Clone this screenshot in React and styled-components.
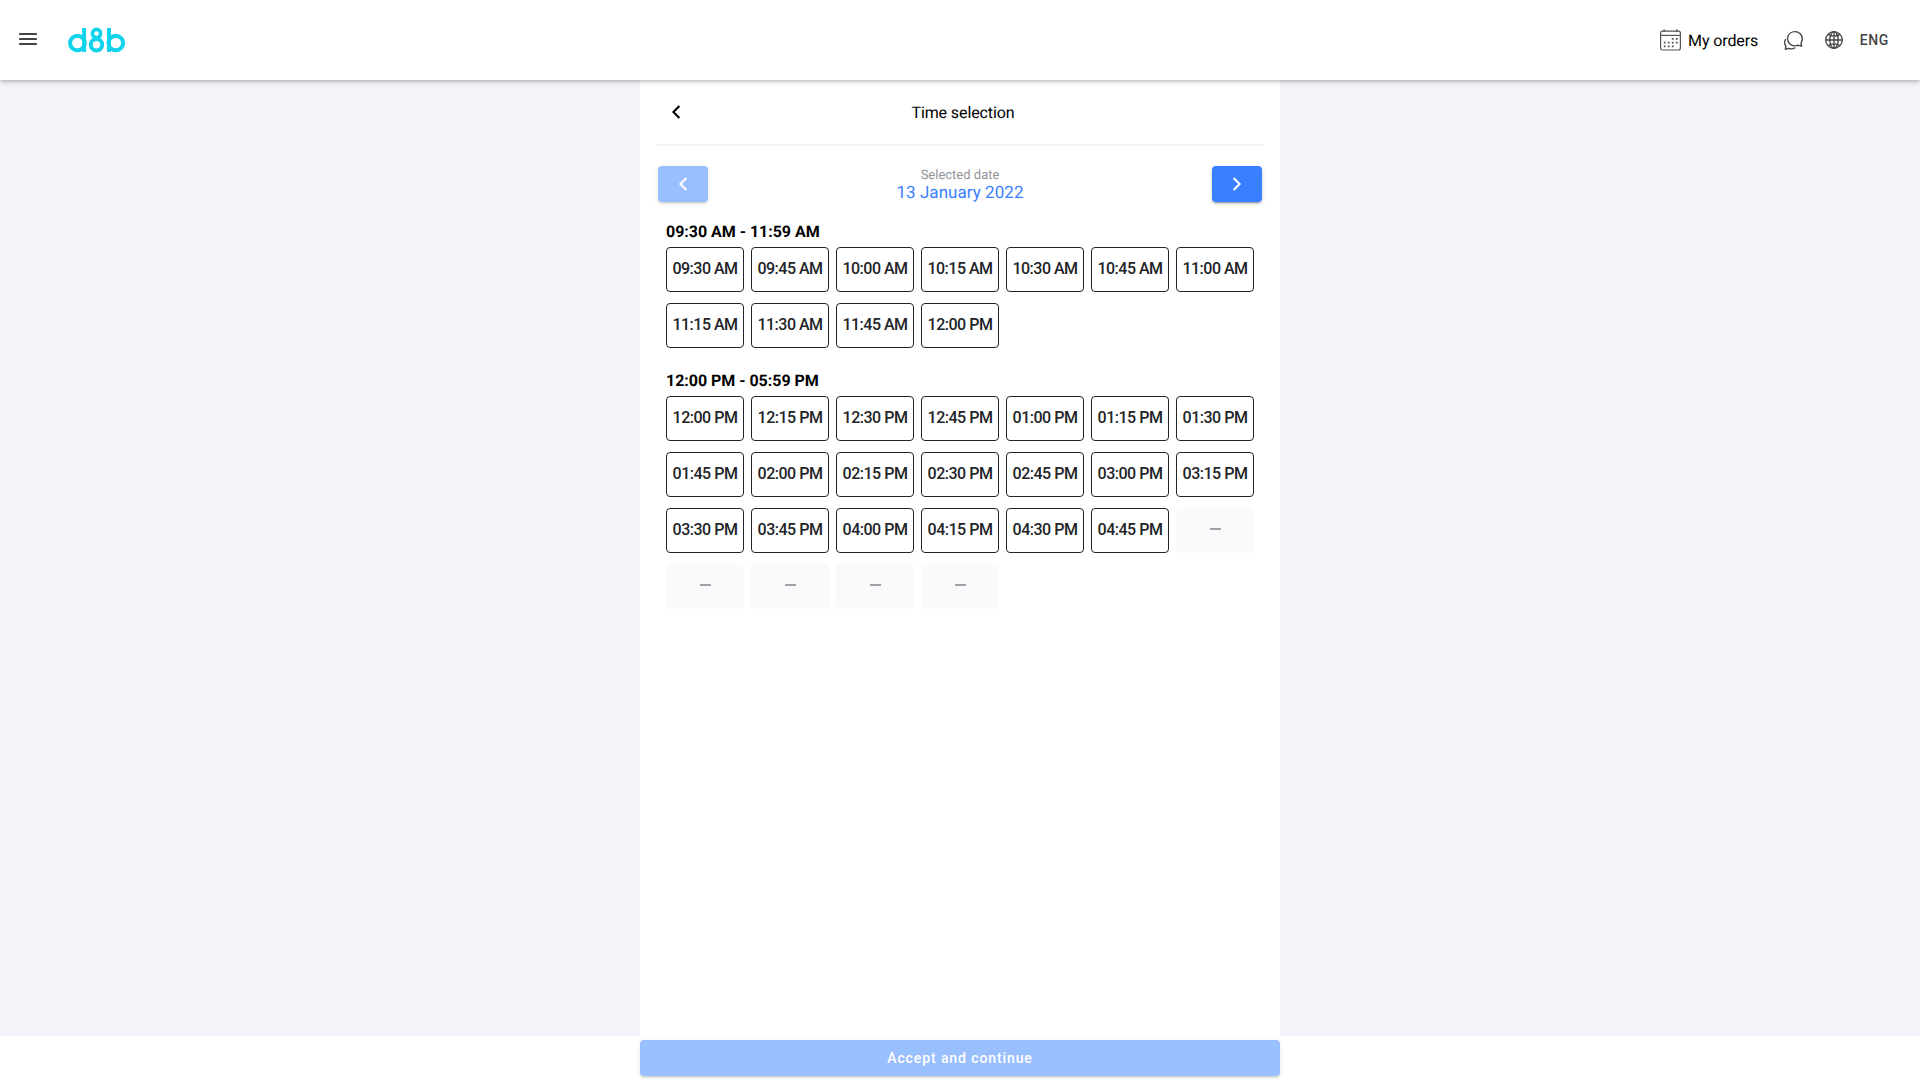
import React from "react";
import styled, { createGlobalStyle } from "styled-components";

const GlobalStyle = createGlobalStyle`
  *, *::before, *::after { box-sizing: border-box; }
  body {
    margin: 0;
    background: #fff;
    color: #000;
    font-family: Roboto, "Liberation Sans", sans-serif;
    font-size: 16px;
    -webkit-font-smoothing: antialiased;
    text-rendering: geometricPrecision;
  }
  button { font-family: inherit; border: 0; padding: 0; background: none; }
`;

const Page = styled.div`
  display: flex;
  flex-direction: column;
  height: 1080px;
  overflow: hidden;
`;

const TopBar = styled.header`
  position: relative;
  z-index: 1;
  display: flex;
  align-items: center;
  justify-content: space-between;
  flex: none;
  height: 80px;
  padding: 0 31px 0 19px;
  background: #fff;
  box-shadow: 0 2px 4px -1px rgba(0, 0, 0, 0.2), 0 1px 6px rgba(0, 0, 0, 0.16);
`;

const BarGroup = styled.div`
  display: flex;
  align-items: center;
`;

const IconButton = styled.button`
  display: flex;
  margin-left: ${(p) => p.$gap || 0}px;
  padding-bottom: ${(p) => p.$lift || 0}px;
  color: #444;
`;

const LogoLink = styled.a`
  display: flex;
  margin-left: 31px;
`;

const OrdersLink = styled.a`
  display: flex;
  align-items: center;
  gap: 7px;
  line-height: 19px;
`;

const Label = styled.span`
  padding: 2px 0 1px;
  letter-spacing: -0.1px;
`;

const Language = styled.button`
  margin-left: 17px;
  color: #444;
  font-size: 14px;
  font-weight: 500;
  line-height: 16px;
  letter-spacing: 0.6px;
`;

const Content = styled.main`
  display: flex;
  justify-content: center;
  flex: none;
  height: 956px;
  background: #f3f4f9;
`;

const Panel = styled.section`
  width: 640px;
  padding: 0 16px;
  background: #fff;
`;

const PanelHeader = styled.div`
  display: grid;
  grid-template-columns: 40px 1fr 34px;
  align-items: center;
  height: 66px;
  border-bottom: 2px solid #f3f4f9;
`;

const Back = styled.button`
  display: flex;
  justify-content: center;
`;

const Title = styled.h1`
  margin: 0;
  padding-top: 1px;
  font-size: 16px;
  font-weight: 400;
  line-height: 19px;
  letter-spacing: -0.1px;
  text-align: center;
`;

const DateRow = styled.div`
  display: flex;
  justify-content: space-between;
  align-items: center;
  height: 36px;
  margin: 20px 2px 0;
`;

const DateButton = styled.button`
  display: flex;
  align-items: center;
  justify-content: center;
  width: 50px;
  height: 36px;
  border-radius: 4px;
  background: #3880ff;
  color: #fff;
  opacity: ${(p) => (p.disabled ? 0.5 : 1)};
  box-shadow: 0 3px 1px -2px rgba(0, 0, 0, 0.2), 0 2px 2px 0 rgba(0, 0, 0, 0.14),
    0 1px 5px 0 rgba(0, 0, 0, 0.12);
`;

const DateLabel = styled.div`
  display: flex;
  flex-direction: column;
  align-items: center;
  padding-top: 1px;
`;

const Caption = styled.span`
  color: #92949c;
  font-size: 13px;
  line-height: 17px;
`;

const DateValue = styled.span`
  color: #3880ff;
  font-size: 17px;
  line-height: 18px;
  letter-spacing: 0.05px;
`;

const Range = styled.section`
  margin: ${(p) => (p.$first ? 20 : 23)}px 10px 0;
`;

const RangeTitle = styled.h2`
  margin: 0;
  padding-bottom: 6px;
  font-size: 16px;
  font-weight: 700;
  letter-spacing: -0.03px;
  line-height: 19px;
`;

const Slots = styled.div`
  display: grid;
  grid-template-columns: repeat(7, 78px);
  grid-auto-rows: 45px;
  gap: 11px 7px;
`;

const Slot = styled.button`
  display: flex;
  align-items: center;
  justify-content: center;
  padding-bottom: 2px;
  border: 1px solid ${(p) => (p.disabled ? "#f9fafc" : "#222428")};
  border-radius: 4px;
  background: ${(p) => (p.disabled ? "#f9fafc" : "#fff")};
  color: ${(p) => (p.disabled ? "#909194" : "#222428")};
  font-size: 16px;
  font-weight: 500;
  line-height: 19px;
  letter-spacing: -0.5px;
  white-space: nowrap;
`;

const Dash = styled.span`
  width: 11px;
  height: 2px;
  margin-bottom: 1px;
  background: #a0a1a4;
`;

const Footer = styled.footer`
  display: flex;
  justify-content: center;
  padding-top: 4px;
`;

const Accept = styled.button`
  width: 640px;
  height: 36px;
  border-radius: 4px;
  background: #3880ff;
  color: #fff;
  font-size: 14px;
  font-weight: 500;
  line-height: 16px;
  letter-spacing: 0.9px;
  opacity: 0.5;
  box-shadow: 0 3px 1px -2px rgba(0, 0, 0, 0.2), 0 2px 2px 0 rgba(0, 0, 0, 0.14),
    0 1px 5px 0 rgba(0, 0, 0, 0.12);
`;

const MenuIcon = () => (
  <svg width="18" height="14" viewBox="0 0 18 14" fill="none" stroke="currentColor" strokeWidth="2.2" strokeLinecap="round">
    <path d="M1 2H17M1 7H17M1 12H17" />
  </svg>
);

const Logo = () => (
  <svg width="57" height="26" viewBox="0 0 57 26" fill="none" stroke="#11d3ea" strokeWidth="4" role="img" aria-label="d8b">
    <circle cx="9.4" cy="16" r="7.3" />
    <line x1="16.1" y1="1" x2="16.1" y2="25" />
    <circle cx="28.5" cy="6.5" r="4.1" strokeWidth="3.6" />
    <circle cx="28.5" cy="17.7" r="5.7" />
    <line x1="41" y1="1" x2="41" y2="25" />
    <circle cx="47.8" cy="16" r="7.3" />
  </svg>
);

const CalendarIcon = () => (
  <svg width="21" height="22" viewBox="0.4 0 21 22" fill="none" stroke="#555" strokeWidth="1.2">
    <rect x="1" y="2.2" width="19.8" height="18.8" rx="2" />
    <path d="M1 6.4H20.8" />
    <path d="M4.5 0.6V3M17.3 0.6V3" strokeWidth="1.5" />
    <path d="M12.2 9.8h1.8M16.2 9.8h1.8M4.2 13.6h1.8M8.2 13.6h1.8M12.2 13.6h1.8M16.2 13.6h1.8M4.2 17.4h1.8M8.2 17.4h1.8M12.2 17.4h1.8" strokeWidth="1.8" />
  </svg>
);

const ChatIcon = () => (
  <svg width="19" height="19" viewBox="32 32 448 448" fill="none" stroke="currentColor" strokeWidth="32" strokeLinecap="round" strokeLinejoin="round">
    <path d="M431 320.6c-1-3.6 1.2-8.6 3.3-12.2a33.68 33.68 0 012.1-3.1A162 162 0 00464 215c.3-92.2-77.5-167-173.7-167-83.9 0-153.9 57.1-170.3 132.9a160.7 160.7 0 00-3.7 34.2c0 92.3 74.8 169.1 171 169.1 15.3 0 35.9-4.6 47.2-7.7s22.5-7.2 25.4-8.3a26.44 26.44 0 019.3-1.7 26 26 0 0110.1 2l56.7 20.1a13.52 13.52 0 003.9 1 8 8 0 008-8 12.85 12.85 0 00-.5-2.7z" />
    <path d="M66.46 232a146.23 146.23 0 006.39 152.67c2.31 3.49 3.61 6.19 3.21 8s-11.93 61.87-11.93 61.87a8 8 0 002.71 7.68A8.17 8.17 0 0072 464a7.26 7.26 0 002.91-.6l56.21-22a15.7 15.7 0 0112 .2c18.94 7.38 39.88 12 60.83 12A159.21 159.21 0 00284 432.11" />
  </svg>
);

const GlobeIcon = () => (
  <svg width="18" height="18" viewBox="0 0 18 18" fill="none" stroke="currentColor" strokeWidth="1.3">
    <circle cx="9" cy="9" r="8.3" />
    <ellipse cx="9" cy="9" rx="4.2" ry="8.3" />
    <path d="M9 .7V17.3M.7 9H17.3M3.2 3.4C6.5 5.8 11.5 5.8 14.8 3.4M3.2 14.6C6.5 12.2 11.5 12.2 14.8 14.6" />
  </svg>
);

const Chevron = ({ right }) => (
  <svg width="10" height="14" viewBox="0 0 10 14" fill="none" stroke="currentColor" strokeWidth="2.1">
    <path d={right ? "M1.6 1L7.6 7L1.6 13" : "M8.4 1L2.4 7L8.4 13"} />
  </svg>
);

const ranges = [
  {
    title: "09:30 AM - 11:59 AM",
    slots: ["09:30 AM", "09:45 AM", "10:00 AM", "10:15 AM", "10:30 AM", "10:45 AM", "11:00 AM", "11:15 AM", "11:30 AM", "11:45 AM", "12:00 PM"],
  },
  {
    title: "12:00 PM - 05:59 PM",
    slots: [
      "12:00 PM", "12:15 PM", "12:30 PM", "12:45 PM", "01:00 PM", "01:15 PM", "01:30 PM",
      "01:45 PM", "02:00 PM", "02:15 PM", "02:30 PM", "02:45 PM", "03:00 PM", "03:15 PM",
      "03:30 PM", "03:45 PM", "04:00 PM", "04:15 PM", "04:30 PM", "04:45 PM", null,
      null, null, null, null,
    ],
  },
];

export default function App() {
  return (
    <Page>
      <GlobalStyle />
      <TopBar>
        <BarGroup>
          <IconButton $lift={1.4} aria-label="Menu"><MenuIcon /></IconButton>
          <LogoLink><Logo /></LogoLink>
        </BarGroup>
        <BarGroup>
          <OrdersLink>
            <CalendarIcon />
            <Label>My orders</Label>
          </OrdersLink>
          <IconButton $gap={26} aria-label="Messages"><ChatIcon /></IconButton>
          <IconButton $gap={21.6} aria-label="Language"><GlobeIcon /></IconButton>
          <Language>ENG</Language>
        </BarGroup>
      </TopBar>
      <Content>
        <Panel>
          <PanelHeader>
            <Back aria-label="Back"><Chevron /></Back>
            <Title>Time selection</Title>
          </PanelHeader>
          <DateRow>
            <DateButton disabled aria-label="Previous day"><Chevron /></DateButton>
            <DateLabel>
              <Caption>Selected date</Caption>
              <DateValue>13 January 2022</DateValue>
            </DateLabel>
            <DateButton aria-label="Next day"><Chevron right /></DateButton>
          </DateRow>
          {ranges.map((range, i) => (
            <Range key={range.title} $first={i === 0}>
              <RangeTitle>{range.title}</RangeTitle>
              <Slots>
                {range.slots.map((time, n) => (
                  <Slot key={n} disabled={!time}>{time || <Dash />}</Slot>
                ))}
              </Slots>
            </Range>
          ))}
        </Panel>
      </Content>
      <Footer>
        <Accept disabled>Accept and continue</Accept>
      </Footer>
    </Page>
  );
}
